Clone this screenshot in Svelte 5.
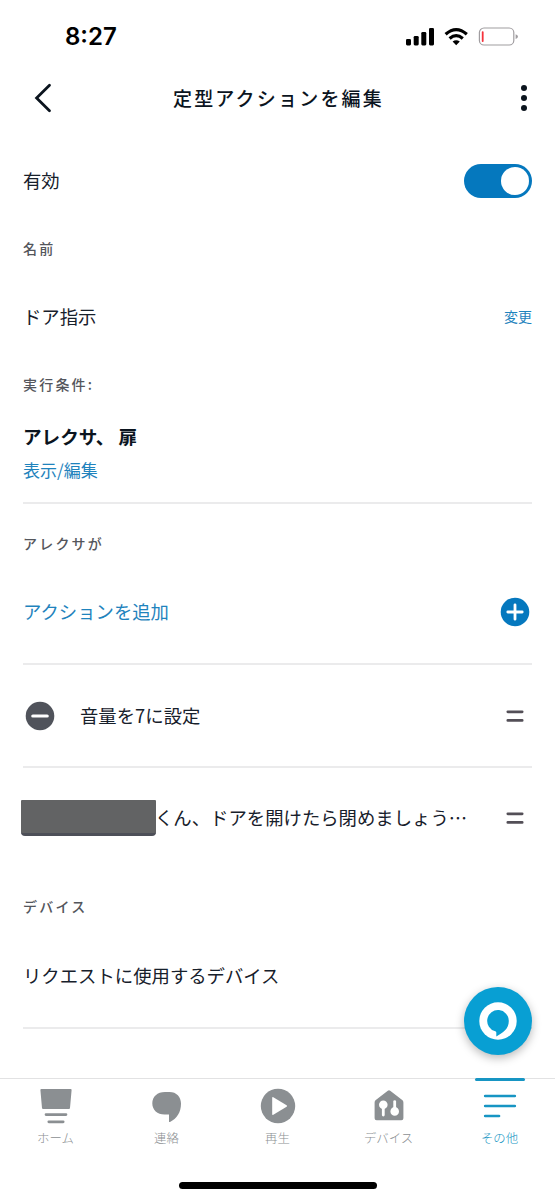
<script lang="ts">
let enabled = $state(true);
let activeTab = $state('more');

const tabs = [
  { id: 'home', label: 'ホーム' },
  { id: 'contact', label: '連絡' },
  { id: 'play', label: '再生' },
  { id: 'devices', label: 'デバイス' },
  { id: 'more', label: 'その他' },
];
</script>

{#snippet handle()}
  <svg class="handle" viewBox="0 0 34 34">
    <path d="M9.8 12.8H24.2M9.8 21.4H24.2" stroke="#534f57" stroke-width="2.7" stroke-linecap="round" />
  </svg>
{/snippet}

<div class="screen">
  <div class="status">
    <span class="time">8:27</span>
    <svg class="indicators" width="114" height="20" viewBox="0 0 114 20">
      <rect x="0" y="12" width="5" height="6.4" rx="1.3" />
      <rect x="7.7" y="9" width="5" height="9.4" rx="1.3" />
      <rect x="15.3" y="5" width="5" height="13.4" rx="1.3" />
      <rect x="23" y="1" width="5" height="17.4" rx="1.3" />
      <g fill="none" stroke="#000" stroke-width="3.2">
        <path d="M39.6 7.2Q50.2-2.1 60.8 7.2" />
        <path d="M43.6 11.4Q50.2 5.9 56.8 11.4" />
      </g>
      <path d="M46.6 14.6Q50.2 11.9 53.8 14.6L50.2 18.3Z" />
      <rect x="73.4" y="1" width="34.4" height="17" rx="4.6" fill="none" stroke="#a09da0" stroke-width="1.2" />
      <rect x="75.8" y="4.2" width="1.8" height="10.8" rx=".8" fill="#f5323c" />
      <path d="M109.6 7.2Q112 8 112 9.6T109.6 12Z" fill="#a09da0" />
    </svg>
  </div>

  <header>
    <button class="back" aria-label="戻る">
      <svg width="20" height="32" viewBox="0 0 20 32">
        <path d="M16.5 3.2L3.6 16L16.5 28.8" fill="none" stroke="#0b141e" stroke-width="2.8" stroke-linecap="round" />
      </svg>
    </button>
    <h1>定型アクションを編集</h1>
    <button class="menu" aria-label="メニュー">
      <svg width="8" height="28" viewBox="0 0 8 28" fill="#0b141e">
        <circle cx="4" cy="4" r="3" />
        <circle cx="4" cy="14" r="3" />
        <circle cx="4" cy="24" r="3" />
      </svg>
    </button>
  </header>

  <main>
    <div class="row">
      <span>有効</span>
      <button
        class="switch"
        class:on={enabled}
        role="switch"
        aria-checked={enabled}
        aria-label="有効"
        onclick={() => (enabled = !enabled)}
      >
        <span class="thumb"></span>
      </button>
    </div>

    <h2 class="tight">名前</h2>
    <div class="row">
      <span>ドア指示</span>
      <button class="change">変更</button>
    </div>

    <h2 class="tight">実行条件:</h2>
    <div class="phrase">
      <strong>アレクサ、 扉</strong>
      <button class="edit">表示/編集</button>
    </div>

    <h2>アレクサが</h2>
    <button class="row line add">
      <span>アクションを追加</span>
      <svg class="handle" viewBox="0 0 34 34">
        <circle cx="17" cy="17" r="14.3" fill="#0578be" />
        <path d="M9.8 17H24.2M17 9.8V24.2" stroke="#fff" stroke-width="2.8" stroke-linecap="round" />
      </svg>
    </button>
    <div class="row line">
      <svg class="remove" viewBox="0 0 34 34">
        <circle cx="17" cy="17" r="14.3" fill="#50535b" />
        <path d="M9.8 17H24.2" stroke="#fff" stroke-width="3.2" stroke-linecap="round" />
      </svg>
      <span class="action">音量を7に設定</span>
      {@render handle()}
    </div>
    <div class="row last">
      <span class="redacted"></span>
      <span class="action">くん、ドアを開けたら閉めましょう…</span>
      {@render handle()}
    </div>

    <h2>デバイス</h2>
    <div class="row line device">
      <span>リクエストに使用するデバイス</span>
    </div>

    <button class="alexa" aria-label="Alexa">
      <svg width="68" height="68" viewBox="0 0 68 68">
        <circle cx="34" cy="34" r="18.7" fill="#fff" />
        <path d="M32.3 49.6V45.6Q32.3 44.6 31.3 44.3A10.8 10.8 0 1 1 44.8 34C44.8 42 39 45.6 32.3 49.6Z" fill="#089fd3" />
      </svg>
    </button>
  </main>

  <nav>
    {#each tabs as tab (tab.id)}
      <button class="tab" class:active={activeTab === tab.id} onclick={() => (activeTab = tab.id)}>
        <svg width="40" height="40" viewBox="0 0 40 40" fill="currentColor">
          {#if tab.id === 'home'}
            <path d="M5.4 3H34.6Q35.7 3 35.6 4L34 22Q33.9 23 32.9 23H7.1Q6.1 23 6 22L4.4 4Q4.3 3 5.4 3Z" />
            <path d="M10 28.6H30M12.8 35.8H27.2" stroke="currentColor" stroke-width="2.7" stroke-linecap="round" />
          {:else if tab.id === 'contact'}
            <path d="M18 6H22.5C29.5 6 34 10.8 34 17.6C34 26.5 29.8 32.8 23 36C22.3 36.3 22 36 22 35.4V28.6H17.5C10.3 28.6 5.3 24 5.3 17.3S10.3 6 18 6Z" />
          {:else if tab.id === 'play'}
            <circle cx="20" cy="20" r="17.2" />
            <path d="M14.2 11.9V28.1Q14.2 29.4 15.3 28.8L28.6 20.7Q29.5 20 28.6 19.3L15.3 11.2Q14.2 10.6 14.2 11.9Z" fill="#fff" />
          {:else if tab.id === 'devices'}
            <path d="M18.8 4.8Q20 3.8 21.2 4.8L33.2 14.1Q34.4 15 34.4 16.4V32.2Q34.4 34.2 32.4 34.2H7.6Q5.6 34.2 5.6 32.2V16.4Q5.6 15 6.8 14.1Z" />
            <g fill="#fff" stroke="#fff" stroke-width="2.8" stroke-linecap="round">
              <circle cx="14.3" cy="18.7" r="2.9" />
              <path d="M14.3 19V29" />
              <circle cx="25.7" cy="25.4" r="2.9" />
              <path d="M25.7 25V15.6" />
            </g>
          {:else}
            <path d="M5.2 10H34.8M5.2 20H34.8M5.2 30H19" stroke="currentColor" stroke-width="2.7" stroke-linecap="round" />
          {/if}
        </svg>
        <span>{tab.label}</span>
      </button>
    {/each}
  </nav>
  <div class="home-bar"></div>
</div>

<style>
  :global(body) {
    margin: 0;
    background: #fff;
  }
  .screen {
    display: flex;
    flex-direction: column;
    box-sizing: border-box;
    width: 555px;
    height: 1200px;
    overflow: hidden;
    background: #fff;
    color: #17202b;
    font-family: 'Noto Sans CJK JP', sans-serif;
    font-size: 18.38px;
    line-height: 1.3;
  }
  button {
    padding: 0;
    border: 0;
    background: none;
    color: inherit;
    font: inherit;
    cursor: pointer;
  }
  svg {
    display: block;
    flex-shrink: 0;
  }
  .status {
    display: flex;
    align-items: center;
    justify-content: space-between;
    height: 74px;
    padding: 0 35px 0 65px;
  }
  .time {
    color: #000;
    font-family: Inter, sans-serif;
    font-size: 24px;
    font-weight: 600;
  }
  header {
    display: grid;
    grid-template-columns: 40px 1fr 40px;
    align-items: center;
    height: 48px;
    padding: 0 27px 0 33px;
  }
  h1 {
    margin: 0;
    color: #0b141e;
    font-size: 19px;
    font-weight: 500;
    letter-spacing: 2.2px;
    text-align: center;
    transform: translateX(-2px);
  }
  .menu {
    justify-self: end;
  }
  main {
    position: relative;
    flex: 1;
    padding: 8px 23px 0;
  }
  .row {
    display: flex;
    align-items: center;
    justify-content: space-between;
    box-sizing: border-box;
    width: 100%;
    height: 101px;
    white-space: nowrap;
  }
  .line {
    height: 103px;
    border-bottom: 2px solid #ebebec;
  }
  .add {
    height: 104px;
    color: #1f83bd;
  }
  .last {
    height: 100px;
  }
  .device {
    height: 105px;
  }
  h2 {
    height: 20px;
    margin: 28px 0 8px;
    color: #54565c;
    font-size: 14px;
    font-weight: 500;
    line-height: 20px;
    letter-spacing: 2.2px;
  }
  h2.tight {
    margin-top: 7px;
  }
  .switch {
    display: flex;
    align-items: center;
    box-sizing: border-box;
    width: 68px;
    height: 34px;
    padding: 3px;
    border-radius: 17px;
    background: #8d9096;
  }
  .switch.on {
    justify-content: flex-end;
    background: #0578be;
  }
  .thumb {
    width: 28px;
    height: 28px;
    border-radius: 50%;
    background: #fff;
  }
  .change {
    color: #1f83bd;
    font-size: 14px;
  }
  .phrase {
    display: flex;
    flex-direction: column;
    align-items: flex-start;
    height: 83px;
    margin-bottom: 29px;
    padding-top: 17px;
    border-bottom: 2px solid #ebebec;
    line-height: 34px;
  }
  strong {
    color: #0b141e;
    font-size: 18.6px;
    font-weight: 700;
  }
  .edit {
    color: #1f83bd;
    font-size: 17px;
  }
  .handle,
  .remove {
    width: 34px;
    height: 34px;
  }
  .remove {
    margin-right: 23px;
  }
  .action {
    flex: 1;
  }
  .redacted {
    width: 135px;
    height: 36px;
    box-sizing: border-box;
    margin: 0 -1px 0 -2px;
    border-bottom: 3px solid #4d4f58;
    border-radius: 1px 1px 4px 4px;
    background: #626364;
  }
  .alexa {
    position: absolute;
    right: 23px;
    bottom: 23px;
    width: 68px;
    height: 68px;
    border-radius: 50%;
    background: #089fd3;
    box-shadow: 0 3px 10px rgba(0, 0, 0, 0.28);
  }
  nav {
    display: flex;
    height: 103px;
    border-top: 1px solid #e2e2e3;
  }
  .tab {
    display: flex;
    flex: 1;
    flex-direction: column;
    align-items: center;
    padding-top: 7px;
    color: #8b8f92;
    font-size: 12.4px;
    font-weight: 300;
  }
  .tab span {
    margin-top: 4px;
  }
  .tab.active {
    position: relative;
    color: #1795c3;
  }
  .tab.active::before {
    content: '';
    position: absolute;
    top: -1px;
    width: 50px;
    height: 3px;
    border-radius: 2px;
    background: #1795c3;
  }
  .home-bar {
    width: 198px;
    height: 7px;
    margin: 0 auto 11px;
    border-radius: 4px;
    background: #000;
  }
</style>
